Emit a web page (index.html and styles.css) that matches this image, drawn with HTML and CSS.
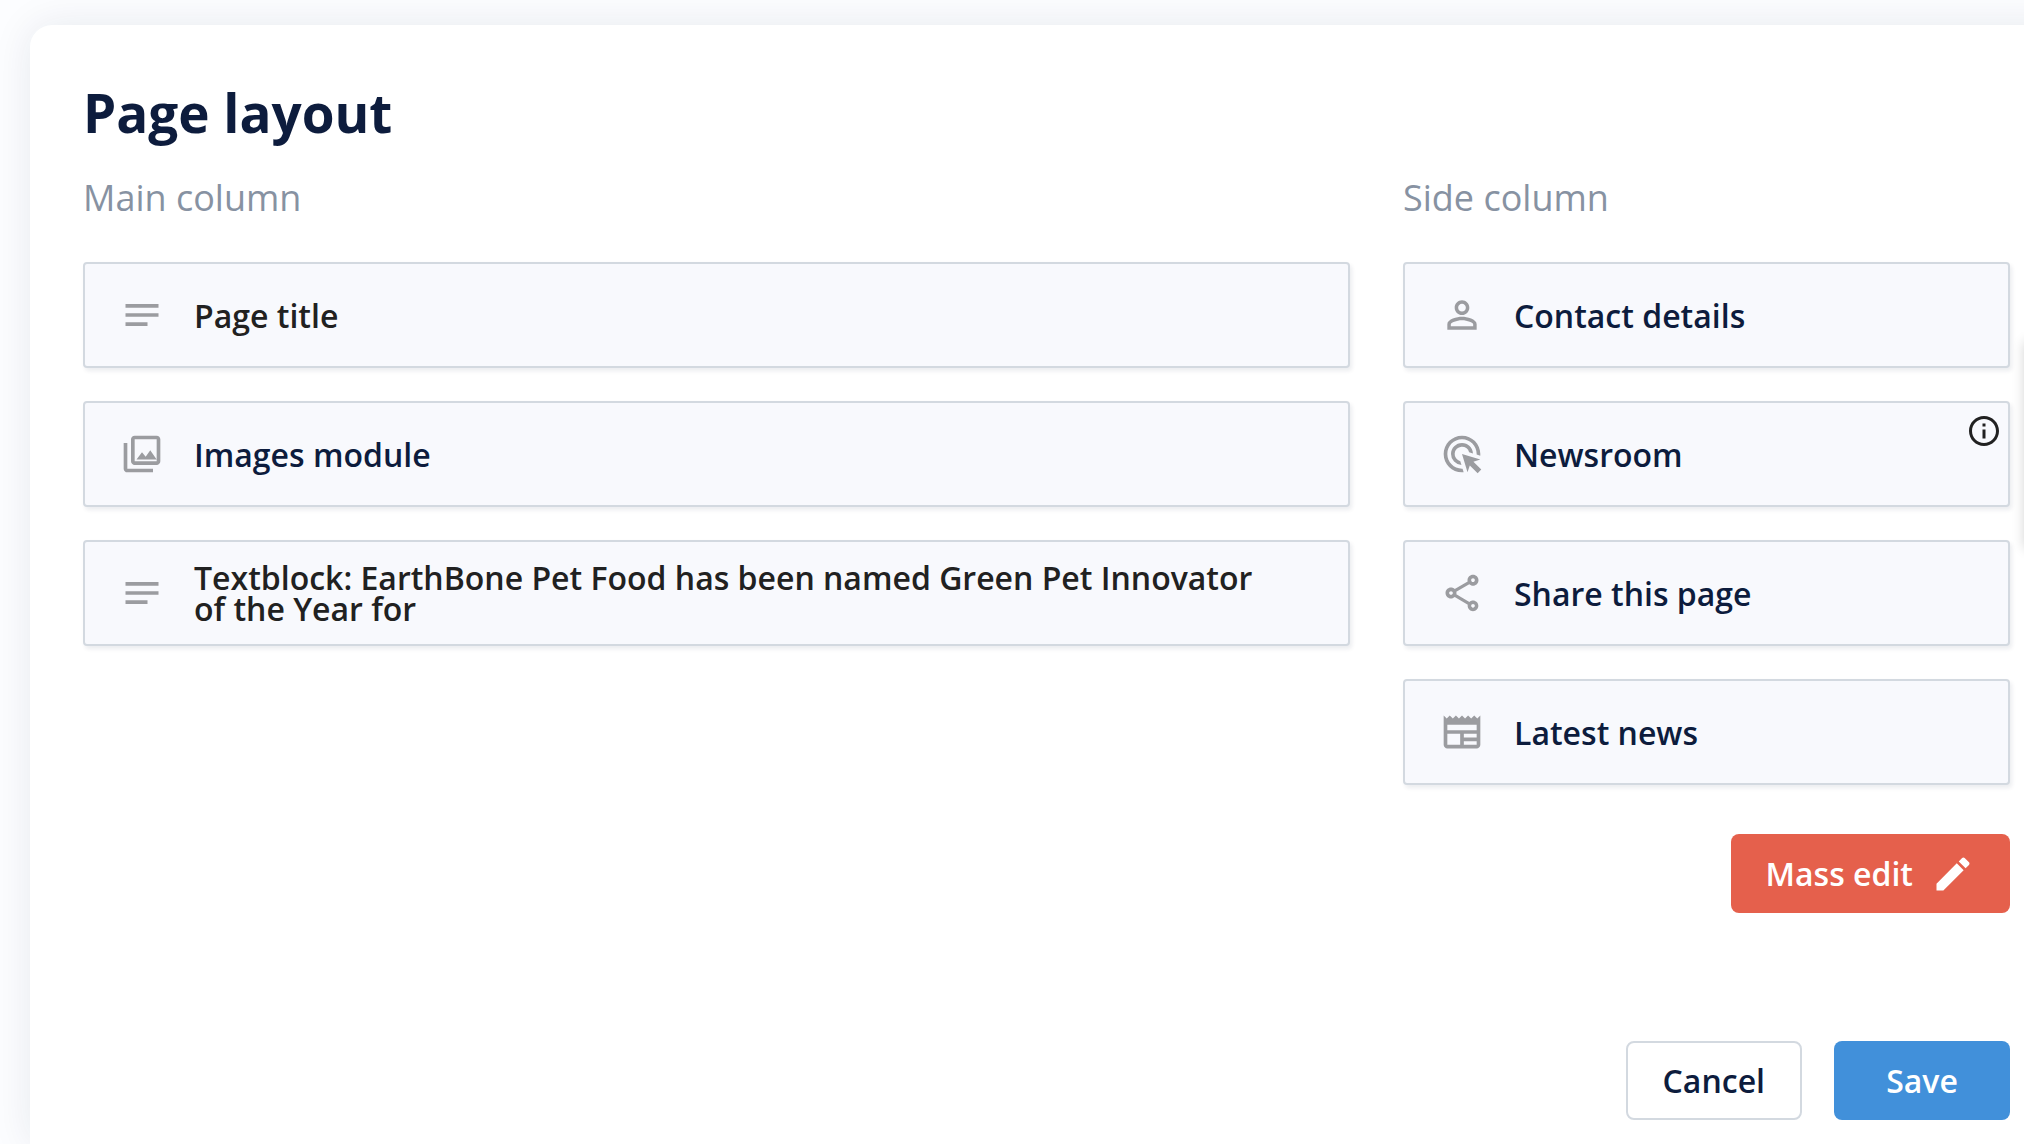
FILE: index.html
```html
<!DOCTYPE html>
<html lang="en">
<head>
  <meta charset="UTF-8" />
  <meta name="viewport" content="width=device-width, initial-scale=1.0"/>
  <title>Page layout</title>
  <link rel="stylesheet" href="styles.css">
</head>
<body>
  <main class="panel">
    <h1>Page layout</h1>

    <div class="columns">
      <section class="column main-column">
        <h2>Main column</h2>
        <ul class="modules">
          <li class="module dark">
            <svg class="icon" viewBox="0 0 24 24"><path d="M3 18h12v-2H3v2zM3 6v2h18V6H3zm0 7h18v-2H3v2z"/></svg>
            <span>Page title</span>
          </li>
          <li class="module">
            <svg class="icon" viewBox="0 0 24 24"><path fill-rule="evenodd" d="M20 4v12H8V4h12m0-2H8c-1.100 0-2 .9-2 2v12c0 1.100.9 2 2 2h12c1.100 0 2-.9 2-2V4c0-1.100-.9-2-2-2zM9 15l3-4 2 2.500 2.500-3.500L20 15zM2 6v14c0 1.100.9 2 2 2h14v-2H4V6H2z"/></svg>
            <span>Images module</span>
          </li>
          <li class="module dark">
            <svg class="icon" viewBox="0 0 24 24"><path d="M3 18h12v-2H3v2zM3 6v2h18V6H3zm0 7h18v-2H3v2z"/></svg>
            <span>Textblock: EarthBone Pet Food has been named Green Pet Innovator of the Year for</span>
          </li>
        </ul>
      </section>

      <section class="column side-column">
        <h2>Side column</h2>
        <ul class="modules">
          <li class="module">
            <svg class="icon" viewBox="0 0 24 24"><path d="M12 5.900c1.160 0 2.100.94 2.100 2.100s-.94 2.100-2.100 2.100S9.900 9.160 9.900 8s.94-2.100 2.100-2.100m0 9c2.970 0 6.100 1.460 6.100 2.100v1.100H5.900V17c0-.64 3.130-2.100 6.100-2.100M12 4C9.790 4 8 5.790 8 8s1.790 4 4 4 4-1.790 4-4-1.790-4-4-4zm0 9c-2.670 0-8 1.340-8 4v3h16v-3c0-2.660-5.330-4-8-4z"/></svg>
            <span>Contact details</span>
          </li>
          <li class="module">
            <svg class="icon" viewBox="0 0 24 24"><path d="M11.710 17.990A5.993 5.993 0 0 1 6 12c0-3.310 2.690-6 6-6 3.220 0 5.840 2.530 5.990 5.710l-2.100-.63a3.999 3.999 0 1 0-4.810 4.810l.63 2.100zM22 12c0 .3-.01.6-.04.9l-1.970-.59c.01-.1.010-.21.010-.31 0-4.420-3.580-8-8-8s-8 3.580-8 8 3.580 8 8 8c.1 0 .21 0 .31-.01l.59 1.970c-.3.030-.6.040-.9.040-5.520 0-10-4.480-10-10S6.480 2 12 2s10 4.480 10 10zm-3.770 4.260L22 15l-10-3 3 10 1.260-3.770 4.270 4.270 1.980-1.980-4.280-4.260z"/></svg>
            <span>Newsroom</span>
            <button type="button" class="info" aria-label="Info">
              <svg viewBox="0 0 24 24"><path d="M11 7h2v2h-2zm0 4h2v6h-2zm1-9C6.480 2 2 6.480 2 12s4.480 10 10 10 10-4.480 10-10S17.520 2 12 2zm0 18c-4.410 0-8-3.590-8-8s3.590-8 8-8 8 3.590 8 8-3.590 8-8 8z"/></svg>
            </button>
          </li>
          <li class="module">
            <svg class="icon" viewBox="0 0 24 24"><path d="M18 16.080c-.76 0-1.440.3-1.960.77L8.910 12.700c.05-.23.09-.46.09-.7s-.04-.47-.09-.7l7.050-4.110c.54.5 1.250.81 2.040.81 1.660 0 3-1.340 3-3s-1.340-3-3-3-3 1.340-3 3c0 .24.040.47.090.7L8.040 9.810C7.500 9.310 6.790 9 6 9c-1.660 0-3 1.340-3 3s1.340 3 3 3c.79 0 1.500-.31 2.040-.81l7.120 4.160c-.05.21-.08.43-.08.65 0 1.610 1.310 2.920 2.920 2.920s2.920-1.310 2.920-2.920-1.310-2.920-2.920-2.920zM18 4c.55 0 1 .45 1 1s-.45 1-1 1-1-.45-1-1 .45-1 1-1zM6 13c-.55 0-1-.45-1-1s.45-1 1-1 1 .45 1 1-.45 1-1 1zm12 7.020c-.55 0-1-.45-1-1s.45-1 1-1 1 .45 1 1-.45 1-1 1z"/></svg>
            <span>Share this page</span>
          </li>
          <li class="module">
            <svg class="icon" viewBox="0 0 24 24"><path d="M22 3l-1.670 1.670L18.670 3 17 4.670 15.330 3l-1.660 1.670L12 3l-1.670 1.670L8.670 3 7 4.670 5.330 3 3.670 4.670 2 3v16c0 1.100.9 2 2 2h16c1.100 0 2-.9 2-2V3zM11 19H4v-6h7v6zm9 0h-7v-2h7v2zm0-4h-7v-2h7v2zm0-4H4V8h16v3z"/></svg>
            <span>Latest news</span>
          </li>
        </ul>
      </section>
    </div>

    <div class="tools">
      <button type="button" class="btn mass-edit">
        Mass edit
        <svg class="icon" viewBox="0 0 24 24"><path d="M3 17.250V21h3.750L17.810 9.940l-3.750-3.750L3 17.250zM20.710 7.040c.39-.39.39-1.020 0-1.410l-2.340-2.340c-.39-.39-1.020-.39-1.410 0l-1.830 1.830 3.750 3.750 1.830-1.830z"/></svg>
      </button>
    </div>

    <div class="actions">
      <button type="button" class="btn cancel">Cancel</button>
      <button type="submit" class="btn save">Save</button>
    </div>
  </main>

  <div class="side-tab"></div>
</body>
</html>
```
FILE: styles.css
```css
* {
  box-sizing: border-box;
}

body {
  margin: 0;
  padding: 25px 0 0 30px;
  min-height: 100vh;
  display: flex;
  overflow: hidden;
  background: #fcfdff;
  color: #0d1c3d;
  font-family: "Open Sans", sans-serif;
}

/* runs past the right edge of the window */
.panel {
  flex: 1;
  margin-right: -60px;
  padding: 52px 74px 24px 53px;
  background: #fff;
  border-radius: 22px 0 0 0;
  box-shadow: 0 0 40px rgba(13, 28, 61, 0.09);
}

h1 {
  margin: 0;
  font-size: 53px;
  line-height: 72px;
  font-weight: 700;
}

h2 {
  margin: 0 0 40px;
  color: #8792a2;
  font-size: 36px;
  line-height: 48px;
  font-weight: 400;
}

.columns {
  display: flex;
  gap: 53px;
  margin-top: 25px;
}

.main-column {
  flex: 1;
}

.side-column {
  width: 607px;
}

.modules {
  display: flex;
  flex-direction: column;
  gap: 33px;
  margin: 0;
  padding: 0;
  list-style: none;
}

.module {
  position: relative;
  display: flex;
  align-items: center;
  gap: 30px;
  min-height: 106px;
  padding: 0 80px 0 35px;
  background: #f8f9fd;
  border: 2px solid #d3d9e0;
  border-radius: 4px;
  box-shadow: 2px 3px 4px rgba(13, 28, 61, 0.08);
  font-size: 32px;
  line-height: 31px;
  font-weight: 600;
}

.dark {
  color: #212121;
}

.icon {
  flex: none;
  width: 44px;
  height: 44px;
  fill: #9b9ca0;
}

.info {
  position: absolute;
  top: 10px;
  right: 6px;
  width: 36px;
  height: 36px;
  padding: 0;
  border: none;
  background: none;
  color: #212121;
  cursor: pointer;
}

.info svg {
  display: block;
  fill: currentColor;
}

.tools,
.actions {
  display: flex;
  justify-content: flex-end;
  gap: 32px;
}

.tools {
  margin-top: 49px;
}

.actions {
  margin-top: 128px;
}

.btn {
  display: flex;
  align-items: center;
  justify-content: center;
  gap: 18px;
  min-width: 176px;
  height: 79px;
  padding: 0 35px;
  border: none;
  border-radius: 8px;
  color: #fff;
  font-family: inherit;
  font-size: 32px;
  font-weight: 600;
  cursor: pointer;
}

.btn .icon {
  fill: #fff;
}

.mass-edit {
  background: #e5604c;
}

.cancel {
  background: #fff;
  border: 2px solid #d3d9e0;
  color: #0d1c3d;
}

.save {
  background: #4190da;
}

/* collapsed drawer, only its shadow shows at the window edge */
.side-tab {
  position: fixed;
  top: 342px;
  right: -41px;
  width: 40px;
  height: 206px;
  background: #fff;
  box-shadow: 0 0 12px rgba(0, 0, 0, 0.2);
}
```
